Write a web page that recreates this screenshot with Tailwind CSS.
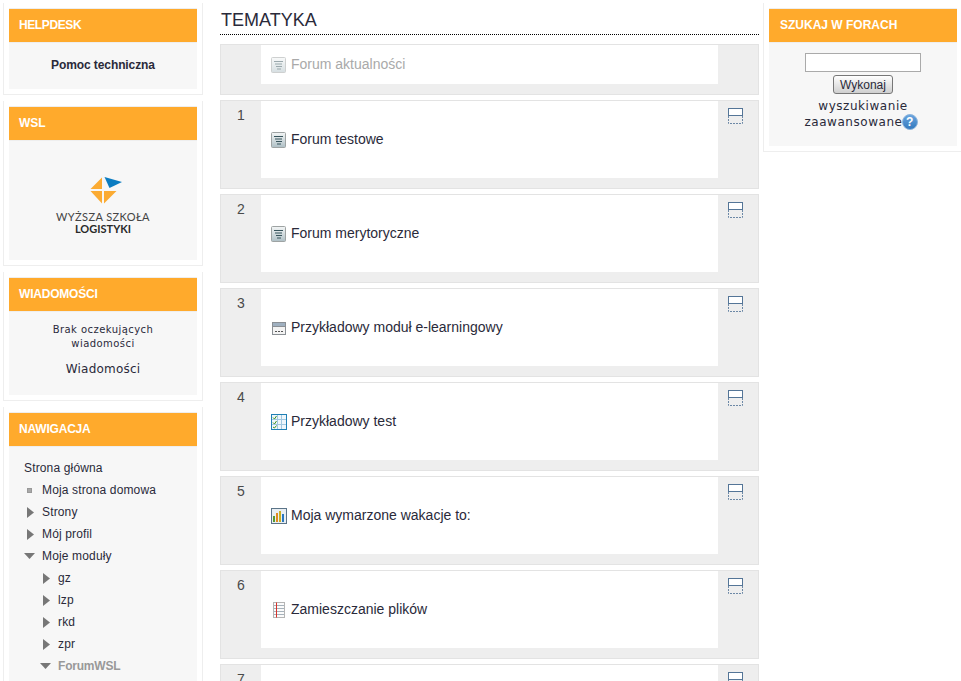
<!DOCTYPE html>
<html lang="pl">
<head>
    <meta charset="UTF-8">
    <title>Tematyka</title>
    <script src="https://cdn.jsdelivr.net/npm/@tailwindcss/browser@4"></script>
</head>
<body class="bg-white h-[681px] overflow-hidden font-['Liberation_Sans',Arial,sans-serif] text-[#2a2a3a]">
<svg width="0" height="0" class="block">
    <defs>
        <linearGradient id="forumFill" x1="0" y1="0" x2="0" y2="1">
            <stop offset="0" stop-color="#f4f6f6"/>
            <stop offset="1" stop-color="#aebfc5"/>
        </linearGradient>
        <linearGradient id="helpFill" x1="0" y1="0" x2="0" y2="1">
            <stop offset="0" stop-color="#6aa6e0"/>
            <stop offset="1" stop-color="#3278bd"/>
        </linearGradient>
        <symbol id="forum" viewBox="0 0 16 16">
            <rect x="0.5" y="0.5" width="14" height="15" rx="1" fill="url(#forumFill)" stroke="#9ea3a3"/>
            <path d="M3 4.5h9M4 7h7M5 9.5h6M6 12h4" stroke="#37545c" fill="none"/>
        </symbol>
        <symbol id="collapse" viewBox="0 0 16 16">
            <rect x="0.5" y="0.5" width="14" height="7" fill="#fff" stroke="#547597"/>
            <path d="M0.5 8v7.5h14V8" fill="none" stroke="#6c88a6" stroke-dasharray="2 1"/>
        </symbol>
    </defs>
</svg>

<div class="flex items-start h-[681px] overflow-hidden">
    <!-- Left column -->
    <div class="w-[200px] ml-[3px] mt-[3px] shrink-0 flex flex-col gap-[6px]">
        <div class="border-x border-b border-[#eeeeee] px-[5px] pt-[5px] pb-[5px]">
            <h2 class="h-[35px] flex items-center pl-[10px] pb-[2px] bg-[#ffaa2c] border-y border-[#eeeeee] text-white text-[12px] font-bold tracking-[-0.4px]">HELPDESK</h2>
            <div class="h-[46px] pb-[2px] bg-[#f7f7f7] flex items-center justify-center text-[12px] font-bold tracking-[-0.1px]">Pomoc techniczna</div>
        </div>

        <div class="border-x border-b border-[#eeeeee] px-[5px] pt-[5px] pb-[5px]">
            <h2 class="h-[35px] flex items-center pl-[10px] pb-[2px] bg-[#ffaa2c] border-y border-[#eeeeee] text-white text-[12px] font-bold">WSL</h2>
            <div class="h-[119px] bg-[#f7f7f7] flex flex-col items-center pt-[36px]">
                <svg width="34" height="28" viewBox="0 0 34 28" class="ml-[5px]">
                    <path d="M13 0.5V12H1.5Z" fill="#fbab33"/>
                    <path d="M13 14H1.5L13 26.5Z" fill="#fbab33"/>
                    <path d="M15 14H27.5L15 26.5Z" fill="#fbab33"/>
                    <path d="M15.5 0L33 5L20.5 11Z" fill="#0b7cc1"/>
                </svg>
                <div class="mt-[5px] font-['Lato',sans-serif] text-[11px] leading-[13px] tracking-[0.4px] text-[#444444]">WYŻSZA SZKOŁA</div>
                <div class="font-['Lato',sans-serif] text-[11px] leading-[12px] font-bold text-[#2a2a2a]">LOGISTYKI</div>
            </div>
        </div>

        <div class="border-x border-b border-[#eeeeee] px-[5px] pt-[5px] pb-[5px]">
            <h2 class="h-[35px] flex items-center pl-[10px] pb-[2px] bg-[#ffaa2c] border-y border-[#eeeeee] text-white text-[12px] font-bold tracking-[-0.2px]">WIADOMOŚCI</h2>
            <div class="h-[83px] bg-[#f7f7f7] flex flex-col items-center pt-[11px] font-['DejaVu_Sans',sans-serif] text-center">
                <div class="text-[10px] leading-[14px] w-[125px] tracking-[0.45px]">Brak oczekujących wiadomości</div>
                <div class="text-[12px] leading-[16px] mt-[10px] tracking-[0.2px]">Wiadomości</div>
            </div>
        </div>

        <div class="border-x border-b border-[#eeeeee] px-[5px] pt-[5px] pb-[5px]">
            <h2 class="h-[35px] flex items-center pl-[10px] pb-[2px] bg-[#ffaa2c] border-y border-[#eeeeee] text-white text-[12px] font-bold tracking-[-0.2px]">NAWIGACJA</h2>
            <ul class="bg-[#f7f7f7] pt-[10px] pb-[20px] text-[12px] leading-[22px] tracking-[0.15px]">
                <li class="pl-[15px]">Strona główna</li>
                <li class="flex items-center pl-[18px]">
                    <span class="w-[5px] h-[5px] bg-[#a9a9a9] border border-[#999999] mr-[10px]"></span>Moja strona domowa
                </li>
                <li class="flex items-center pl-[18px]">
                    <span class="w-[15px]"><svg width="7" height="11" viewBox="0 0 7 11"><path d="M0 0L7 5.5L0 11Z" fill="#777777"/></svg></span>Strony
                </li>
                <li class="flex items-center pl-[18px]">
                    <span class="w-[15px]"><svg width="7" height="11" viewBox="0 0 7 11"><path d="M0 0L7 5.5L0 11Z" fill="#777777"/></svg></span>Mój profil
                </li>
                <li class="flex items-center pl-[15px]">
                    <span class="w-[18px]"><svg width="11" height="6" viewBox="0 0 11 6"><path d="M0 0H11L5.5 6Z" fill="#777777"/></svg></span>Moje moduły
                </li>
                <li class="flex items-center pl-[34px]">
                    <span class="w-[15px]"><svg width="7" height="11" viewBox="0 0 7 11"><path d="M0 0L7 5.5L0 11Z" fill="#777777"/></svg></span>gz
                </li>
                <li class="flex items-center pl-[34px]">
                    <span class="w-[15px]"><svg width="7" height="11" viewBox="0 0 7 11"><path d="M0 0L7 5.5L0 11Z" fill="#777777"/></svg></span>lzp
                </li>
                <li class="flex items-center pl-[34px]">
                    <span class="w-[15px]"><svg width="7" height="11" viewBox="0 0 7 11"><path d="M0 0L7 5.5L0 11Z" fill="#777777"/></svg></span>rkd
                </li>
                <li class="flex items-center pl-[34px]">
                    <span class="w-[15px]"><svg width="7" height="11" viewBox="0 0 7 11"><path d="M0 0L7 5.5L0 11Z" fill="#777777"/></svg></span>zpr
                </li>
                <li class="flex items-center pl-[31px] font-bold text-[#999999] tracking-[-0.2px]">
                    <span class="w-[18px]"><svg width="11" height="6" viewBox="0 0 11 6"><path d="M0 0H11L5.5 6Z" fill="#777777"/></svg></span>ForumWSL
                </li>
            </ul>
        </div>
    </div>

    <!-- Main column -->
    <div class="w-[539px] ml-[17px] shrink-0">
        <h3 class="h-[35px] pt-[9px] pl-px mb-[9px] border-b border-dotted border-black text-[18px] leading-[22px]">TEMATYKA</h3>

        <div class="flex flex-col gap-[5px]">
            <div class="flex border border-[#e3e3e3] bg-[#eeeeee] pb-[10px]">
                <div class="w-[40px]"></div>
                <div class="w-[457px] h-[39px] bg-white flex items-center pl-[10px] text-[14px] text-[#a9a9a9]">
                    <svg width="16" height="16" class="mr-[4px] opacity-50"><use href="#forum"/></svg>Forum aktualności
                </div>
            </div>

            <div class="flex border border-[#e3e3e3] bg-[#eeeeee] pb-[10px]">
                <div class="w-[40px] text-center text-[14px] pt-[4px] text-[#4a4a4a]">1</div>
                <div class="w-[457px] h-[77px] bg-white flex items-center pl-[10px] text-[14px]">
                    <svg width="16" height="16" class="mr-[4px]"><use href="#forum"/></svg>Forum testowe
                </div>
                <div class="pl-[10px] pt-[7px]"><svg width="16" height="16" class="block"><use href="#collapse"/></svg></div>
            </div>

            <div class="flex border border-[#e3e3e3] bg-[#eeeeee] pb-[10px]">
                <div class="w-[40px] text-center text-[14px] pt-[4px] text-[#4a4a4a]">2</div>
                <div class="w-[457px] h-[77px] bg-white flex items-center pl-[10px] text-[14px]">
                    <svg width="16" height="16" class="mr-[4px]"><use href="#forum"/></svg>Forum merytoryczne
                </div>
                <div class="pl-[10px] pt-[7px]"><svg width="16" height="16" class="block"><use href="#collapse"/></svg></div>
            </div>

            <div class="flex border border-[#e3e3e3] bg-[#eeeeee] pb-[10px]">
                <div class="w-[40px] text-center text-[14px] pt-[4px] text-[#4a4a4a]">3</div>
                <div class="w-[457px] h-[77px] bg-white flex items-center pl-[10px] text-[14px]">
                    <svg width="16" height="16" viewBox="0 0 16 16" class="mr-[4px]">
                        <rect x="1.5" y="2.5" width="13" height="12" fill="#f3f3f3" stroke="#8a8f94"/>
                        <rect x="2" y="3" width="12" height="3" fill="#9fb0c0"/>
                        <path d="M2 6.5h12" stroke="#8a8f94"/>
                        <path d="M4 11.5h2M7 11.5h2M10 11.5h2" stroke="#555555"/>
                    </svg>Przykładowy moduł e-learningowy
                </div>
                <div class="pl-[10px] pt-[7px]"><svg width="16" height="16" class="block"><use href="#collapse"/></svg></div>
            </div>

            <div class="flex border border-[#e3e3e3] bg-[#eeeeee] pb-[10px]">
                <div class="w-[40px] text-center text-[14px] pt-[4px] text-[#4a4a4a]">4</div>
                <div class="w-[457px] h-[77px] bg-white flex items-center pl-[10px] text-[14px]">
                    <svg width="16" height="16" viewBox="0 0 16 16" class="mr-[4px]">
                        <rect x="0.5" y="0.5" width="15" height="15" fill="#eef6fb" stroke="#1f80b5"/>
                        <path d="M6.5 1v14M10.5 1v14M1 5.5h14M1 10.5h14" stroke="#a3c8e0"/>
                        <path d="M2 3.5l1.5 1.5l2-3M2 8.5l1.5 1.5l2-3M2 13l1.5 1l2-2.5" stroke="#3f9420" fill="none"/>
                    </svg>Przykładowy test
                </div>
                <div class="pl-[10px] pt-[7px]"><svg width="16" height="16" class="block"><use href="#collapse"/></svg></div>
            </div>

            <div class="flex border border-[#e3e3e3] bg-[#eeeeee] pb-[10px]">
                <div class="w-[40px] text-center text-[14px] pt-[4px] text-[#4a4a4a]">5</div>
                <div class="w-[457px] h-[77px] bg-white flex items-center pl-[10px] text-[14px]">
                    <svg width="16" height="16" viewBox="0 0 16 16" class="mr-[4px]">
                        <rect x="0.5" y="0.5" width="15" height="15" fill="#e9eef2" stroke="#5b7488"/>
                        <rect x="2" y="8" width="2" height="6" fill="#5a9a2e"/>
                        <rect x="5" y="5" width="2" height="9" fill="#e08a1e"/>
                        <rect x="8" y="3" width="2" height="11" fill="#c8b020"/>
                        <rect x="11" y="6" width="2" height="8" fill="#2a78c0"/>
                    </svg>Moja wymarzone wakacje to:
                </div>
                <div class="pl-[10px] pt-[7px]"><svg width="16" height="16" class="block"><use href="#collapse"/></svg></div>
            </div>

            <div class="flex border border-[#e3e3e3] bg-[#eeeeee] pb-[10px]">
                <div class="w-[40px] text-center text-[14px] pt-[4px] text-[#4a4a4a]">6</div>
                <div class="w-[457px] h-[77px] bg-white flex items-center pl-[10px] text-[14px]">
                    <svg width="16" height="16" viewBox="0 0 16 16" class="mr-[4px]">
                        <rect x="2.5" y="0.5" width="11" height="15" fill="#fbfbfb" stroke="#b5b5b5"/>
                        <path d="M3 3.5h10M3 6.5h10M3 9.5h10M3 12.5h10" stroke="#a6b2bb"/>
                        <path d="M5.5 0.5v15" stroke="#d8322a"/>
                    </svg>Zamieszczanie plików
                </div>
                <div class="pl-[10px] pt-[7px]"><svg width="16" height="16" class="block"><use href="#collapse"/></svg></div>
            </div>

            <div class="flex border border-[#e3e3e3] bg-[#eeeeee] pb-[10px]">
                <div class="w-[40px] text-center text-[14px] pt-[4px] text-[#4a4a4a]">7</div>
                <div class="w-[457px] h-[77px] bg-white"></div>
                <div class="pl-[10px] pt-[7px]"><svg width="16" height="16" class="block"><use href="#collapse"/></svg></div>
            </div>
        </div>
    </div>

    <!-- Right column -->
    <div class="w-[200px] ml-[4px] mt-[3px] shrink-0 border-x border-b border-[#eeeeee] px-[5px] pt-[5px] pb-[5px]">
        <h2 class="h-[35px] flex items-center pl-[11px] pb-[2px] bg-[#ffaa2c] border-y border-[#eeeeee] text-white text-[12px] font-bold">SZUKAJ W FORACH</h2>
        <div class="h-[103px] bg-[#f7f7f7] flex flex-col items-center pt-[10px] font-['DejaVu_Sans',sans-serif] text-center">
            <input type="text" class="w-[116px] h-[19px] bg-white border border-[#aaaaaa]">
            <button type="button" class="w-[60px] h-[19px] mt-[3px] rounded-[3px] border border-[#777777] bg-linear-to-b from-white to-[#cfcfcf] font-['Liberation_Sans',sans-serif] text-[12px] leading-[16px]">Wykonaj</button>
            <div class="w-[130px] mt-[4px] text-[12px] leading-[16px] tracking-[0.55px]">wyszukiwanie zaawansowane<svg width="16" height="16" viewBox="0 0 16 16" class="inline align-[-4px] -ml-[1px] mr-[4px]"><circle cx="8" cy="8" r="7.5" fill="url(#helpFill)" stroke="#8fb5dc"/><text x="8" y="12" text-anchor="middle" font-family="Liberation Sans" font-size="12" font-weight="bold" fill="#ffffff">?</text></svg></div>
        </div>
    </div>
</div>
</body>
</html>
